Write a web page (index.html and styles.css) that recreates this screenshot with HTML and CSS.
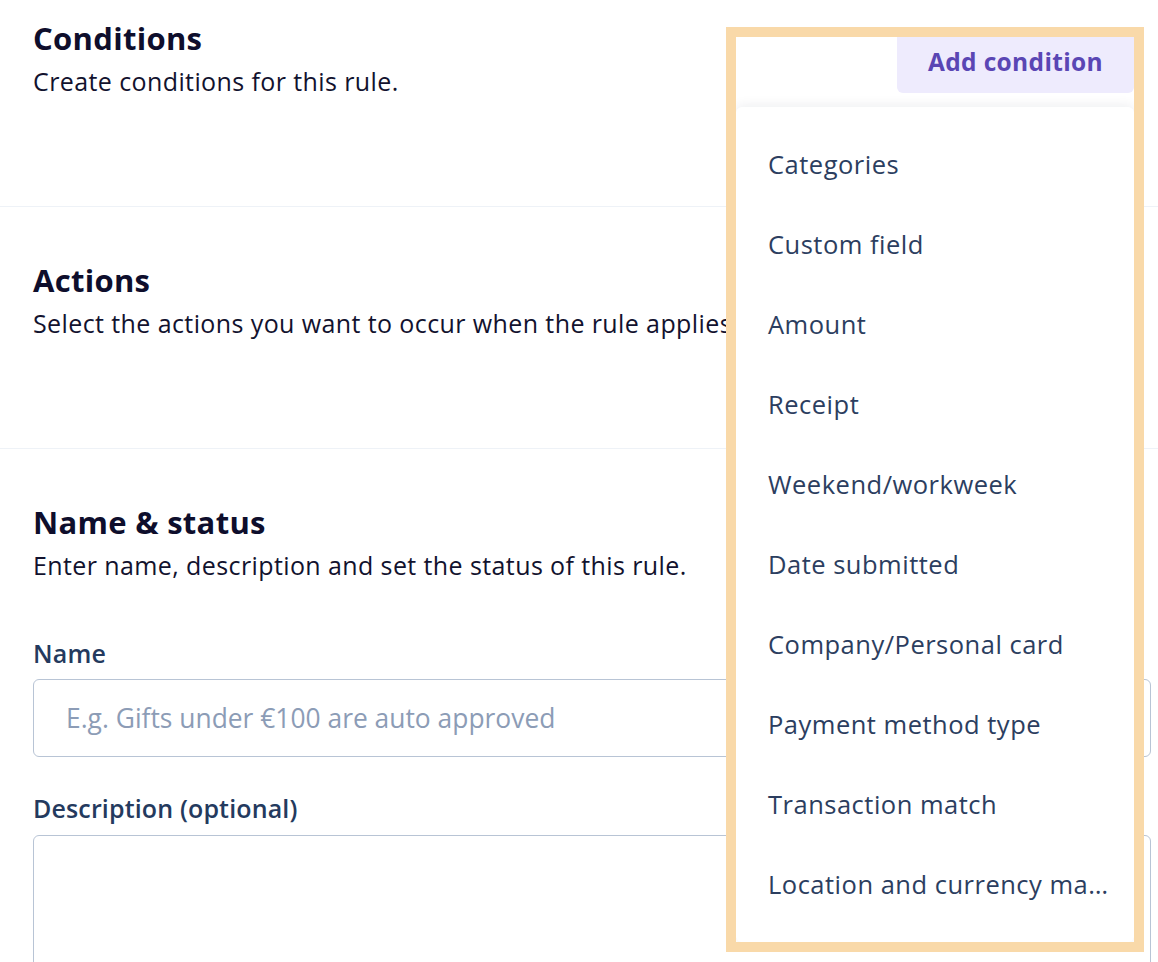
FILE: index.html
```html
<!DOCTYPE html>
<html lang="en">
<head>
<meta charset="utf-8">
<title>Rule conditions</title>
<link rel="stylesheet" href="styles.css">
</head>
<body>
<div class="page">
  <section class="section first">
    <h2 class="title">Conditions</h2>
    <p class="subtitle">Create conditions for this rule.</p>
  </section>
  <section class="section">
    <h2 class="title">Actions</h2>
    <p class="subtitle">Select the actions you want to occur when the rule applies.</p>
  </section>
  <section class="section last">
    <h2 class="title">Name &amp; status</h2>
    <p class="subtitle">Enter name, description and set the status of this rule.</p>
    <div class="fields">
      <label class="label" for="rule-name">Name</label>
      <input class="input" id="rule-name" type="text" placeholder="E.g. Gifts under €100 are auto approved">
      <label class="label label-desc" for="rule-desc">Description (optional)</label>
      <textarea class="textarea" id="rule-desc"></textarea>
    </div>
  </section>

  <div class="dropdown">
    <div class="dd-inner">
      <div class="dd-top">
        <button class="add-btn" type="button">Add condition</button>
      </div>
      <ul class="menu">
        <li class="menu-item">Categories</li>
        <li class="menu-item">Custom field</li>
        <li class="menu-item">Amount</li>
        <li class="menu-item">Receipt</li>
        <li class="menu-item">Weekend/workweek</li>
        <li class="menu-item">Date submitted</li>
        <li class="menu-item">Company/Personal card</li>
        <li class="menu-item">Payment method type</li>
        <li class="menu-item">Transaction match</li>
        <li class="menu-item">Location and currency match</li>
      </ul>
    </div>
  </div>
</div>
</body>
</html>
```
FILE: styles.css
```css
* { box-sizing: border-box; }
html, body { margin: 0; padding: 0; background: #ffffff; }
body {
  font-family: "Open Sans", "Noto Sans", sans-serif;
  width: 1158px;
  height: 962px;
  overflow: hidden;
}
.page {
  position: relative;
  width: 1158px;
  height: 962px;
  overflow: hidden;
}
.section {
  padding: 55px 7px 110px 33px;
  border-bottom: 1px solid #eef2f7;
}
.section.first { padding-top: 20px; }
.section.last { border-bottom: none; padding-bottom: 0; }
.title {
  margin: 0;
  font-size: 31px;
  line-height: 36px;
  font-weight: 700;
  color: #0e0e2c;
  letter-spacing: 0.3px;
}
.subtitle {
  margin: 10px 0 0;
  font-size: 25px;
  line-height: 30px;
  color: #12122e;
  letter-spacing: 0.4px;
  white-space: nowrap;
}
.fields {
  display: flex;
  flex-direction: column;
  margin-top: 58px;
}
.label {
  font-size: 25px;
  line-height: 30px;
  font-weight: 600;
  color: #243a5e;
  letter-spacing: 0.15px;
}
.label-desc { margin-top: 36px; }
.input, .textarea {
  width: 100%;
  border: 1.5px solid #b8c4d5;
  border-radius: 6px;
  font-family: inherit;
  background: #fff;
  outline: none;
}
.input {
  margin-top: 11px;
  height: 78px;
  padding: 0 32px;
  font-size: 26.4px;
  color: #243a5e;
}
.input::placeholder { color: #8c9cb6; }
.textarea {
  margin-top: 12px;
  height: 180px;
  resize: none;
}

.dropdown {
  position: absolute;
  left: 726px;
  top: 27px;
  width: 418px;
  height: 925px;
  border: 10px solid #f9d9a9;
  background: #ffffff;
}
.dd-inner {
  height: 100%;
  overflow: hidden;
  display: flex;
  flex-direction: column;
}
.dd-top {
  height: 56px;
  display: flex;
  justify-content: flex-end;
  flex-shrink: 0;
}
.add-btn {
  margin-top: -8px;
  width: 237px;
  height: 64px;
  border: none;
  border-radius: 6px;
  background: #eeebfd;
  color: #5a46b4;
  font-family: inherit;
  font-size: 24.5px;
  font-weight: 700;
  letter-spacing: 0.35px;
  padding: 0;
}
.menu {
  list-style: none;
  margin: 14px 0 0;
  padding: 18px 0 17px;
  background: #fff;
  border-radius: 6px;
  box-shadow: 0 -2px 12px rgba(20, 30, 60, 0.07);
}
.menu-item {
  height: 80px;
  line-height: 79px;
  padding: 0 20px 0 32px;
  font-size: 25.5px;
  letter-spacing: 0.5px;
  color: #2c3e5f;
  white-space: nowrap;
  overflow: hidden;
  text-overflow: ellipsis;
}
```
